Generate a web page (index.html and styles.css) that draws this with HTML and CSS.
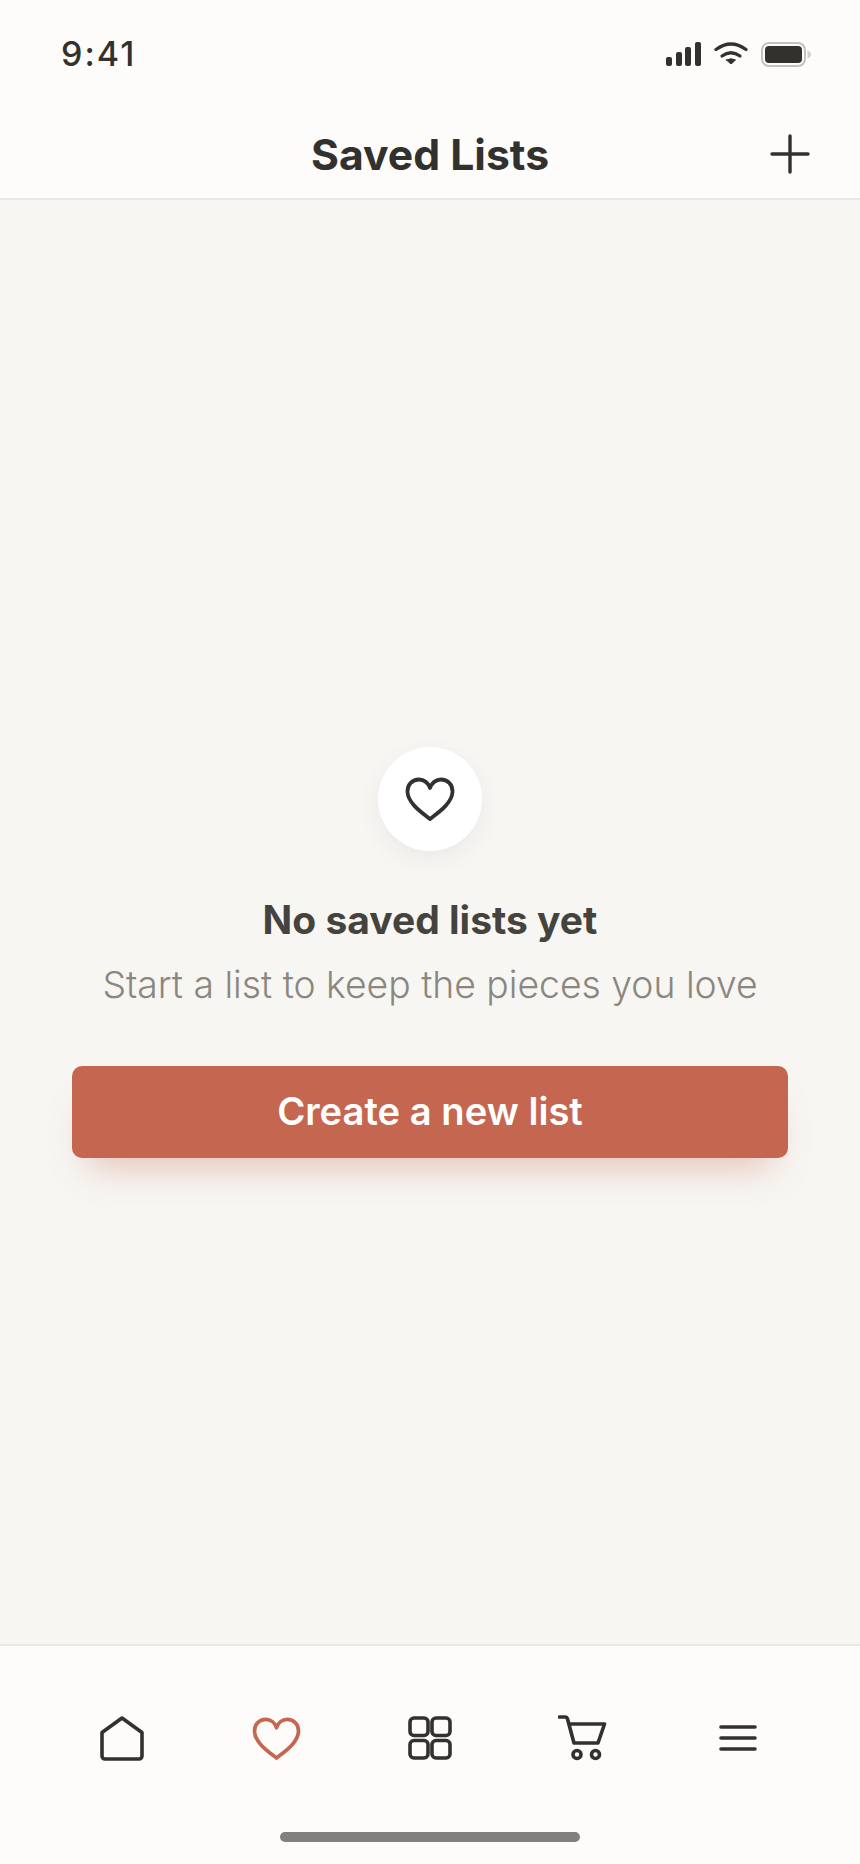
FILE: index.html
```html
<!DOCTYPE html>
<html lang="en">
<head>
    <meta charset="UTF-8">
    <meta name="viewport" content="width=device-width, initial-scale=1.0">
    <title>Saved Lists</title>
    <link rel="stylesheet" href="styles.css">
</head>
<body>
    <div class="screen">
        <div class="top">
            <div class="status-bar">
                <span class="time">9:41</span>
                <div class="status-icons">
                    <svg width="35" height="24" viewBox="0 0 35 24" fill="#32312e">
                        <rect x="0" y="15" width="6" height="9" rx="2"/>
                        <rect x="10" y="10" width="6" height="14" rx="2"/>
                        <rect x="19" y="5" width="6" height="19" rx="2"/>
                        <rect x="29" y="0" width="6" height="24" rx="2"/>
                    </svg>
                    <svg width="34" height="24" viewBox="0 0 34 24" fill="none" stroke="#32312e" stroke-width="3.2" stroke-linecap="round">
                        <path d="M2 7.500Q17 -3.500 32 7.500"/>
                        <path d="M8 14Q17 7.500 26 14"/>
                        <path d="M12.500 18L17 22L21.500 18Q17 15.500 12.500 18Z" fill="#32312e" stroke-width="1"/>
                    </svg>
                    <svg width="50" height="25" viewBox="0 0 50 25">
                        <rect x="1" y="1" width="43" height="23" rx="7" fill="none" stroke="#c3c2bf" stroke-width="2"/>
                        <rect x="4" y="4" width="37" height="17" rx="4" fill="#32312e"/>
                        <path d="M46.500 8.500Q50 10 50 12.500Q50 15 46.500 16.500Z" fill="#d2d1ce"/>
                    </svg>
                </div>
            </div>
            <div class="nav-bar">
                <span></span>
                <h1 class="nav-title">Saved Lists</h1>
                <svg class="nav-add" width="40" height="40" viewBox="0 0 40 40" stroke="#32312e" stroke-width="3.4" stroke-linecap="round">
                    <path d="M20 2V38M2 20H38"/>
                </svg>
            </div>
        </div>

        <div class="empty">
            <div class="empty-icon">
                <svg width="50" height="44" viewBox="0 0 50 44" fill="none" stroke="#32312e" stroke-width="3.8" stroke-linejoin="round" stroke-linecap="round">
                    <path d="M25 42C19 37 3 27 2.500 15C2.200 7.500 7.500 2.500 14 2.500C19 2.500 23.500 6 25 11C26.500 6 31 2.500 36 2.500C42.500 2.500 47.800 7.500 47.500 15C47 27 31 37 25 42Z"/>
                </svg>
            </div>
            <h2 class="empty-title">No saved lists yet</h2>
            <p class="empty-text">Start a list to keep the pieces you love</p>
            <a class="create-btn">Create a new list</a>
        </div>

        <div class="bottom">
            <div class="tab-bar">
                <div class="tab">
                    <svg width="44" height="45" viewBox="0 0 44 45" fill="none" stroke="#32312e" stroke-width="3.6" stroke-linejoin="round">
                        <path d="M22 2L2 16.500V40A3 3 0 0 0 5 43H39A3 3 0 0 0 42 40V16.500Z"/>
                    </svg>
                </div>
                <div class="tab">
                    <svg width="49" height="43" viewBox="0 0 50 44" fill="none" stroke="#c56650" stroke-width="3.8" stroke-linejoin="round" stroke-linecap="round">
                        <path d="M25 42C19 37 3 27 2.500 15C2.200 7.500 7.500 2.500 14 2.500C19 2.500 23.500 6 25 11C26.500 6 31 2.500 36 2.500C42.500 2.500 47.800 7.500 47.500 15C47 27 31 37 25 42Z"/>
                    </svg>
                </div>
                <div class="tab">
                    <svg width="44" height="44" viewBox="0 0 44 44" fill="none" stroke="#32312e" stroke-width="3.6">
                        <rect x="2" y="2" width="18" height="17.500" rx="4"/>
                        <rect x="24" y="2" width="18" height="17.500" rx="4"/>
                        <rect x="2" y="24.500" width="18" height="17.500" rx="4"/>
                        <rect x="24" y="24.500" width="18" height="17.500" rx="4"/>
                    </svg>
                </div>
                <div class="tab">
                    <svg width="52" height="46" viewBox="0 0 52 46" fill="none" stroke="#32312e" stroke-width="3.6" stroke-linecap="round" stroke-linejoin="round">
                        <path d="M1.500 2H7Q9 2 9.500 4L16 28H40L46.500 9H11.500"/>
                        <circle cx="19" cy="39.500" r="4"/>
                        <circle cx="37.500" cy="39.500" r="4"/>
                    </svg>
                </div>
                <div class="tab">
                    <svg width="38" height="26" viewBox="0 0 38 26" stroke="#32312e" stroke-width="3.6" stroke-linecap="round">
                        <path d="M2 2H36M2 13H36M2 24H36"/>
                    </svg>
                </div>
            </div>
            <div class="home-indicator"></div>
        </div>
    </div>
</body>
</html>
```

FILE: styles.css
```css
* {
    box-sizing: border-box;
}

body {
    margin: 0;
    font-family: Inter, "Liberation Sans", sans-serif;
    background: #f7f6f3;
}

.screen {
    display: flex;
    flex-direction: column;
    height: 1864px;
}

.top {
    background: #fdfcfa;
    border-bottom: 2px solid #e9e8e5;
}

.status-bar {
    display: flex;
    justify-content: space-between;
    align-items: flex-start;
    height: 110px;
    padding: 41px 49px 0 61px;
}

.time {
    font-size: 34px;
    font-weight: 500;
    line-height: 26px;
    letter-spacing: 2px;
    color: #32312e;
}

.status-icons {
    display: flex;
    align-items: flex-start;
    gap: 13px;
    padding-top: 1px;
}

.nav-bar {
    display: grid;
    grid-template-columns: 1fr auto 1fr;
    align-items: center;
    height: 88px;
    padding-right: 50px;
    padding-left: 50px;
}

.nav-title {
    margin: 0;
    font-size: 42.700px;
    font-weight: 700;
    color: #32312e;
}

.nav-add {
    justify-self: end;
}

.empty {
    flex: 1;
    display: flex;
    flex-direction: column;
    align-items: center;
    justify-content: center;
    padding: 60px 72px 0;
}

.empty-icon {
    display: flex;
    align-items: center;
    justify-content: center;
    width: 104px;
    height: 104px;
    border-radius: 50%;
    background: #fff;
    box-shadow: 0 8px 24px rgba(50, 49, 46, 0.06);
}

.empty-title {
    margin: 46px 0 0;
    font-size: 39px;
    line-height: 46px;
    font-weight: 700;
    color: #45433d;
}

.empty-text {
    margin: 19px 0 0;
    font-size: 37.300px;
    line-height: 46px;
    font-weight: 350;
    color: #8a877e;
}

.create-btn {
    display: block;
    width: 100%;
    margin-top: 58px;
    height: 92px;
    line-height: 90px;
    text-align: center;
    font-size: 38.200px;
    font-weight: 600;
    color: #fff;
    background: #c56650;
    border-radius: 10px;
    box-shadow: 0 24px 36px -16px rgba(197, 102, 80, 0.38);
}

.bottom {
    height: 220px;
    background: #fdfcfa;
    border-top: 2px solid #e9e8e5;
}

.tab-bar {
    display: flex;
    padding: 69px 45px 0;
    height: 186px;
}

.tab {
    flex: 1;
    display: flex;
    justify-content: center;
    align-items: flex-start;
    height: 46px;
}

.tab svg {
    margin: auto;
}

.home-indicator {
    width: 300px;
    height: 10px;
    margin: 0 auto;
    border-radius: 5px;
    background: #82807c;
}
```
